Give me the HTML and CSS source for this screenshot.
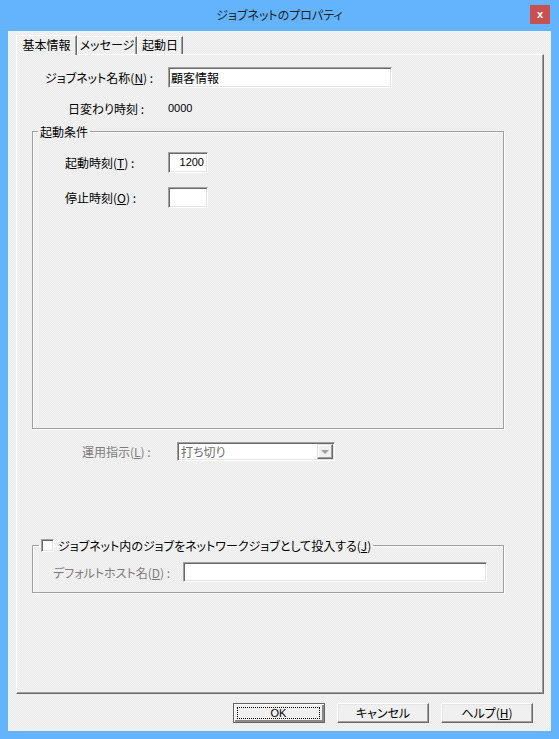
FILE: index.html
```html
<!DOCTYPE html>
<html lang="ja">

<head>
    <meta charset="UTF-8">
    <meta name="viewport" content="width=device-width, initial-scale=1.0">
    <title>ジョブネットのプロパティ</title>
    <link rel="stylesheet" href="styles.css">
</head>

<body>

    <div class="window">
        <div class="titlebar">
            <span class="title">ジョブネットのプロパティ</span>
            <span class="close">x</span>
        </div>

        <div class="client">
            <div class="tabs">
                <div class="tab tab-basic active">基本情報</div>
                <div class="tab tab-msg">メッセージ</div>
                <div class="tab tab-day">起動日</div>
            </div>

            <div class="pane">
                <div class="row row-name">
                    <span class="label">ジョブネット名称(<u>N</u>) :</span>
                    <div class="edit edit-name">顧客情報</div>
                </div>

                <div class="row row-change">
                    <span class="label">日変わり時刻 :</span>
                    <span class="value">0000</span>
                </div>

                <fieldset class="group group-start">
                    <legend>起動条件</legend>
                    <div class="row row-time">
                        <span class="label">起動時刻(<u>T</u>) :</span>
                        <div class="edit edit-time">1200</div>
                    </div>
                    <div class="row row-time row-stop">
                        <span class="label">停止時刻(<u>O</u>) :</span>
                        <div class="edit edit-time"></div>
                    </div>
                </fieldset>

                <div class="row row-mode disabled">
                    <span class="label">運用指示(<u>L</u>) :</span>
                    <div class="combo">
                        <span class="combo-text">打ち切り</span>
                        <span class="combo-btn"><span class="arrow"></span></span>
                    </div>
                </div>

                <fieldset class="group group-net">
                    <legend><span class="check"></span>ジョブネット内のジョブをネットワークジョブとして投入する(<u>J</u>)</legend>
                    <div class="row row-host disabled">
                        <span class="label">デフォルトホスト名(<u>D</u>) :</span>
                        <div class="edit edit-host"></div>
                    </div>
                </fieldset>
            </div>

            <div class="buttons">
                <button class="btn btn-default"><span class="focus">OK</span></button>
                <button class="btn">キャンセル</button>
                <button class="btn">ヘルプ(<u>H</u>)</button>
            </div>
        </div>
    </div>

</body>

</html>
```

FILE: styles.css
```css
html,
body {
    margin: 0
}

body {
    font-family: "Noto Sans CJK JP", "Liberation Sans", sans-serif;
    font-size: 12px;
    font-feature-settings: "palt";
    color: #000;
}

u {
    text-underline-offset: 1px;
}

.window {
    width: 559px;
    height: 739px;
    box-sizing: border-box;
    padding: 0 8px 8px 8px;
    background: #63b3fd;
    display: flex;
    flex-direction: column;
}

.titlebar {
    height: 31px;
    display: grid;
    grid-template-columns: 1fr auto 1fr;
}

.title {
    grid-column: 2;
    align-self: center;
    margin-top: -3px;
    color: #222;
}

.close {
    grid-column: 3;
    justify-self: end;
    align-self: start;
    margin-top: 5px;
    margin-right: 1px;
    width: 20px;
    height: 19px;
    background: #c75050;
    color: #fff;
    font-family: "Liberation Sans", sans-serif;
    font-size: 11px;
    font-weight: bold;
    line-height: 18px;
    text-align: center;
}

.client {
    flex: 1;
    display: flex;
    flex-direction: column;
    padding: 5px 7px 8px 8px;
    background-color: #f0f0f0;
    background-image: repeating-conic-gradient(#f3f3f3 0 25%, #ebebeb 0 50%);
    background-size: 2px 2px;
}

/* tabs */
.tabs {
    display: flex;
    align-items: flex-end;
    height: 18px;
}

.tab {
    box-sizing: border-box;
    height: 18px;
    line-height: 16px;
    text-align: center;
    border-top: 1px solid #fff;
    border-left: 1px solid #fff;
    border-right: 1px solid #696969;
    box-shadow: inset -1px 0 0 #a0a0a0;
}

.tab-basic {
    width: 61px;
}

.tab-msg {
    width: 60px;
}

.tab-day {
    width: 46px;
}

.tab.active {
    position: relative;
    z-index: 1;
    height: 20px;
    line-height: 18px;
    margin-bottom: -1px;
    background-color: #f0f0f0;
    background-image: repeating-conic-gradient(#f3f3f3 0 25%, #ebebeb 0 50%);
    background-size: 2px 2px;
}

.pane {
    flex: 1;
    box-sizing: border-box;
    margin-right: 0;
    padding-top: 12px;
    border-top: 1px solid #fff;
    border-left: 1px solid #fff;
    border-right: 1px solid #696969;
    border-bottom: 1px solid #696969;
    box-shadow: inset -1px -1px 0 #a0a0a0;
}

/* rows */
.row {
    display: grid;
    align-items: center;
}

.label {
    white-space: pre;
}

.row-name {
    grid-template-columns: 151px 224px;
}

.row-name .label {
    padding-left: 28px;
}

.row-change {
    grid-template-columns: 151px auto;
    height: 20px;
    margin-top: 10px;
}

.row-change .label {
    padding-left: 51px;
}

.value {
    font-family: "Liberation Sans", sans-serif;
    font-size: 11px;
}

.edit {
    box-sizing: border-box;
    height: 21px;
    padding: 0 3px;
    line-height: 19px;
    background: #fff;
    border-top: 1px solid #a0a0a0;
    border-left: 1px solid #a0a0a0;
    border-right: 1px solid #fff;
    border-bottom: 1px solid #fff;
    box-shadow: inset 1px 1px 0 #696969, inset -1px -1px 0 #e3e3e3;
}

.edit-name {
    padding-left: 2px;
}

.edit-time {
    text-align: right;
    font-family: "Liberation Sans", sans-serif;
    font-size: 11px;
}

.edit-host {
    height: 20px;
}

/* group boxes */
.group {
    box-sizing: border-box;
    width: 472px;
    margin: 0 0 0 15px;
    padding: 0;
    min-inline-size: 0;
    border: 1px solid #a0a0a0;
    box-shadow: inset 1px 1px 0 #fff, 1px 1px 0 #fff;
}

.group legend {
    padding: 0 2px;
    line-height: 17px;
}

.group-start {
    height: 306px;
    margin-top: 5px;
    padding-top: 12px;
}

.group-start legend {
    margin-left: 5px;
}

.row-time {
    grid-template-columns: 135px 40px;
}

.row-time .label {
    padding-left: 32px;
}

.row-stop {
    margin-top: 14px;
}

.disabled {
    color: #7b7b7b;
}

.row-mode {
    grid-template-columns: 160px 158px;
    margin-top: 13px;
}

.row-mode .label {
    padding-left: 65px;
}

.combo {
    box-sizing: border-box;
    height: 19px;
    display: flex;
    align-items: center;
    background: #fff;
    border-top: 1px solid #a0a0a0;
    border-left: 1px solid #a0a0a0;
    border-right: 1px solid #fff;
    border-bottom: 1px solid #fff;
    box-shadow: inset 1px 1px 0 #696969, inset -1px -1px 0 #e3e3e3;
}

.combo-text {
    flex: 1;
    padding-left: 3px;
    color: #6d6d6d;
    line-height: 17px;
}

.combo-btn {
    box-sizing: border-box;
    width: 16px;
    height: 15px;
    margin-right: 1px;
    display: flex;
    align-items: center;
    justify-content: center;
    background: #f0f0f0;
    border-top: 1px solid #e3e3e3;
    border-left: 1px solid #e3e3e3;
    border-right: 1px solid #696969;
    border-bottom: 1px solid #696969;
    box-shadow: inset -1px -1px 0 #a0a0a0, inset 1px 1px 0 #fff;
}

.arrow {
    width: 0;
    height: 0;
    border-left: 4px solid transparent;
    border-right: 4px solid transparent;
    border-top: 4px solid #a0a0a0;
    margin-top: 1px;
}

.group-net {
    margin-top: 76px;
    padding: 8px 0 10px 0;
}

.group-net legend {
    margin-left: 6px;
    display: flex;
    align-items: center;
}

.check {
    box-sizing: border-box;
    width: 13px;
    height: 13px;
    margin-right: 4px;
    background: #fff;
    border-top: 1px solid #a0a0a0;
    border-left: 1px solid #a0a0a0;
    border-right: 1px solid #fff;
    border-bottom: 1px solid #fff;
    box-shadow: inset 1px 1px 0 #696969, inset -1px -1px 0 #e3e3e3;
}

.row-host {
    grid-template-columns: 150px 304px;
}

.row-host .label {
    padding-left: 20px;
}

/* buttons */
.buttons {
    display: flex;
    justify-content: flex-end;
    gap: 12px;
    margin-top: 9px;
    margin-right: 11px;
}

.btn {
    box-sizing: border-box;
    width: 92px;
    height: 20px;
    padding: 0;
    font: inherit;
    color: #000;
    line-height: 16px;
    background: #f0f0f0;
    border-top: 1px solid #fff;
    border-left: 1px solid #fff;
    border-right: 1px solid #696969;
    border-bottom: 1px solid #696969;
    box-shadow: inset -1px -1px 0 #a0a0a0, inset 1px 1px 0 #e3e3e3;
}

.btn-default {
    border: 1px solid #646464;
    box-shadow: inset 1px 1px 0 #fff, inset -2px -2px 0 #8a8a8a;
    display: flex;
    align-items: stretch;
    padding: 3px 4px 3px 3px;
}

.focus {
    flex: 1;
    border: 1px dotted #000;
    line-height: 10px;
    font-family: "Liberation Sans", sans-serif;
    font-size: 11px;
}
```
